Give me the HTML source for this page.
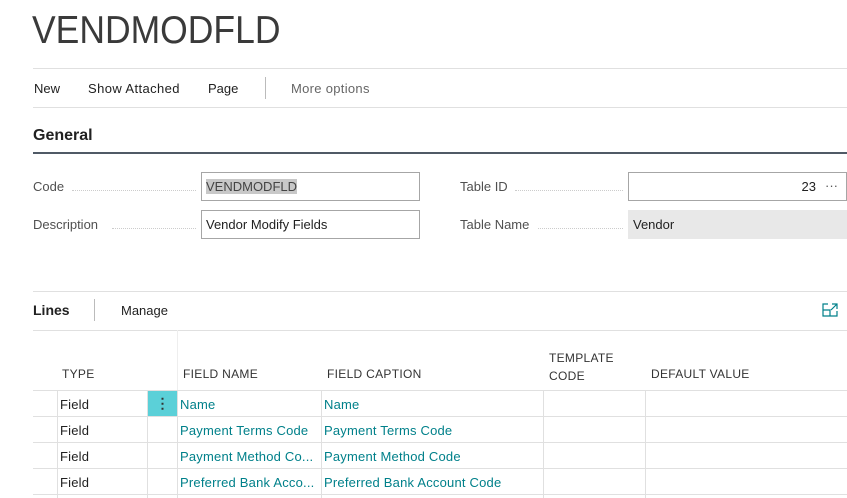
<!DOCTYPE html>
<html><head><style>
body{margin:0;width:847px;height:498px;overflow:hidden;background:#fff;font-family:"Liberation Sans",sans-serif;color:#212121;position:relative}
.a{position:absolute;white-space:nowrap}
.h{position:absolute;height:1px;background:#e0e0e0}
.v{position:absolute;width:1px;background:#e0e0e0}
.lbl{font-size:13px;color:#505050}
.dots{position:absolute;border-bottom:1px dotted #ccc;height:0}
.box{position:absolute;border:1px solid #a6a6a6;box-sizing:border-box;font-size:13px;padding:6px 4px}
.th{font-size:12px;color:#333;letter-spacing:.3px}
.c{font-size:13px;letter-spacing:.2px}
.t{color:#00808a;font-size:13px;letter-spacing:.2px}
</style></head><body>
<div class="a" style="left:32px;top:9px;font-size:39px;color:#3a3a3a;transform:scaleX(0.91);transform-origin:0 0">VENDMODFLD</div>
<div class="h" style="left:33px;top:68px;width:814px"></div>
<div class="a" style="left:34px;top:81px;font-size:13px">New</div>
<div class="a" style="left:88px;top:81px;font-size:13px;letter-spacing:.4px">Show Attached</div>
<div class="a" style="left:208px;top:81px;font-size:13px">Page</div>
<div class="v" style="left:265px;top:77px;height:22px;background:#bbb"></div>
<div class="a" style="left:291px;top:81px;font-size:13px;color:#666;letter-spacing:.3px">More options</div>
<div class="h" style="left:33px;top:107px;width:814px"></div>
<div class="a" style="left:33px;top:127px;font-size:16px;font-weight:bold">General</div>
<div class="h" style="left:33px;top:152px;width:814px;height:2px;background:#505a66"></div>

<div class="a lbl" style="left:33px;top:179px">Code</div>
<div class="dots" style="left:72px;top:190px;width:124px"></div>
<div class="box" style="left:201px;top:172px;width:219px;height:29px"><span style="background:#c8c8c8;color:#444">VENDMODFLD</span></div>
<div class="a lbl" style="left:33px;top:217px">Description</div>
<div class="dots" style="left:112px;top:228px;width:84px"></div>
<div class="box" style="left:201px;top:210px;width:219px;height:29px">Vendor Modify Fields</div>

<div class="a lbl" style="left:460px;top:179px">Table ID</div>
<div class="dots" style="left:515px;top:190px;width:108px"></div>
<div class="box" style="left:628px;top:172px;width:219px;height:29px;text-align:right;padding-right:30px">23<span style="position:absolute;right:8px;top:5px;color:#555">···</span></div>
<div class="a lbl" style="left:460px;top:217px">Table Name</div>
<div class="dots" style="left:538px;top:228px;width:85px"></div>
<div class="box" style="left:628px;top:210px;width:219px;height:29px;background:#e8e8e8;border-color:#e8e8e8">Vendor</div>

<div class="h" style="left:33px;top:291px;width:814px"></div>
<div class="a" style="left:33px;top:302px;font-size:14px;font-weight:bold">Lines</div>
<div class="v" style="left:94px;top:299px;height:22px;background:#bbb"></div>
<div class="a" style="left:121px;top:303px;font-size:13px">Manage</div>
<svg class="a" style="left:822px;top:303px" width="16" height="14" viewBox="0 0 16 14"><path d="M6 1H1V13H15V8M1 7H8V13M10 1H15V6M15 1L9 7" fill="none" stroke="#00808a" stroke-width="1.2"/></svg>
<div class="h" style="left:33px;top:330px;width:814px"></div>

<div class="v" style="left:177px;top:330px;height:60px;background:#eee"></div>
<div class="a th" style="left:62px;top:367px">TYPE</div>
<div class="a th" style="left:183px;top:367px">FIELD NAME</div>
<div class="a th" style="left:327px;top:367px">FIELD CAPTION</div>
<div class="a th" style="left:549px;top:349px;line-height:18px">TEMPLATE<br>CODE</div>
<div class="a th" style="left:651px;top:367px">DEFAULT VALUE</div>

<div class="h" style="left:33px;top:390px;width:814px"></div>
<div class="h" style="left:33px;top:416px;width:814px"></div>
<div class="h" style="left:33px;top:442px;width:814px"></div>
<div class="h" style="left:33px;top:468px;width:814px"></div>
<div class="h" style="left:33px;top:494px;width:814px"></div>
<div class="v" style="left:57px;top:390px;height:108px"></div>
<div class="v" style="left:147px;top:390px;height:108px"></div>
<div class="v" style="left:177px;top:390px;height:108px"></div>
<div class="v" style="left:321px;top:390px;height:108px"></div>
<div class="v" style="left:543px;top:390px;height:108px"></div>
<div class="v" style="left:645px;top:390px;height:108px"></div>
<div class="a" style="left:148px;top:391px;width:29px;height:25px;background:#5bd0d8;text-align:center;font-size:14px;line-height:24px;color:#333;font-weight:bold">⋮</div>

<div class="a c" style="left:60px;top:397px">Field</div>
<div class="a t" style="left:180px;top:397px">Name</div>
<div class="a t" style="left:324px;top:397px">Name</div>
<div class="a c" style="left:60px;top:423px">Field</div>
<div class="a t" style="left:180px;top:423px">Payment Terms Code</div>
<div class="a t" style="left:324px;top:423px">Payment Terms Code</div>
<div class="a c" style="left:60px;top:449px">Field</div>
<div class="a t" style="left:180px;top:449px">Payment Method Co...</div>
<div class="a t" style="left:324px;top:449px">Payment Method Code</div>
<div class="a c" style="left:60px;top:475px">Field</div>
<div class="a t" style="left:180px;top:475px">Preferred Bank Acco...</div>
<div class="a t" style="left:324px;top:475px">Preferred Bank Account Code</div>
</body></html>
